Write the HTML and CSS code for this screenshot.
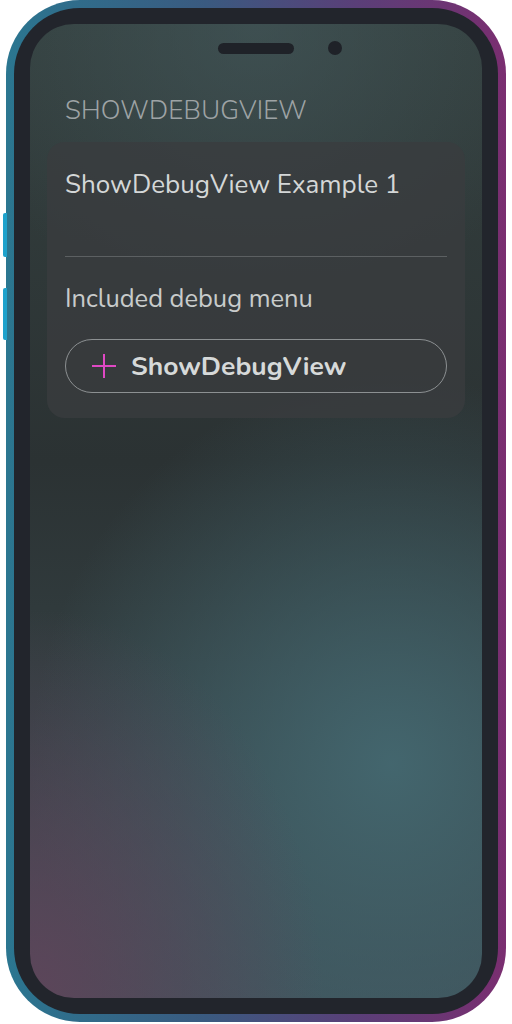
FILE: index.html
```html
<!DOCTYPE html>
<html>
<head>
<meta charset="utf-8">
<link rel="stylesheet" href="styles.css">
</head>
<body>
<div class="device">
  <div class="side-btn btn-a"></div>
  <div class="side-btn btn-b"></div>
  <div class="bezel">
    <div class="screen">
      <div class="notch">
        <span class="speaker"></span>
        <span class="camera"></span>
      </div>
      <h1 class="title">SHOWDEBUGVIEW</h1>
      <div class="card">
        <div class="card-head">ShowDebugView Example 1</div>
        <div class="divider"></div>
        <div class="card-label">Included debug menu</div>
        <button class="pill">
          <svg class="plus" width="26" height="26" viewBox="0 0 26 26"><path d="M13 1V25M1 13H25" stroke="#e048c4" stroke-width="2" fill="none"/></svg>
          <span>ShowDebugView</span>
        </button>
      </div>
    </div>
  </div>
</div>
</body>
</html>
```
FILE: styles.css
```css
html, body { margin: 0; padding: 0; background: #ffffff; }
body { width: 512px; height: 1024px; overflow: hidden; font-family: "Nunito", "Lato", "Open Sans", sans-serif; }

.device {
  position: relative;
  margin-left: 6px;
  width: 500px;
  height: 1022px;
  box-sizing: border-box;
  padding: 8px 8px 8px 8px;
  border-radius: 74px;
  background: linear-gradient(90deg, #2b7690 0%, #3a5a80 40%, #5a3f78 70%, #7a2e70 100%);
}
.side-btn {
  position: absolute;
  left: -3px;
  width: 4px;
  background: #1ea2cc;
  border-radius: 2px 0 0 2px;
}
.btn-a { top: 213px; height: 44px; }
.btn-b { top: 288px; height: 52px; }

.bezel {
  height: 100%;
  box-sizing: border-box;
  padding: 16px;
  border-radius: 66px;
  background: #22252c;
}
.screen {
  height: 100%;
  border-radius: 44px;
  overflow: hidden;
  display: flex;
  flex-direction: column;
  background:
    radial-gradient(ellipse 70% 30% at 50% 0%, rgba(70,92,96,0.55), rgba(70,92,96,0) 100%),
    radial-gradient(ellipse 65% 40% at 0% 100%, rgba(96,68,90,0.9), rgba(96,68,90,0) 100%),
    radial-gradient(ellipse 80% 40% at 80% 76%, rgba(68,104,112,0.95), rgba(68,104,112,0) 100%),
    linear-gradient(180deg, #34403f 0%, #2b3233 45%, #303a3c 60%, #3e5058 100%);
}

.notch {
  display: grid;
  grid-template-columns: 1fr auto 1fr;
  align-items: center;
  padding-top: 17px;
}
.speaker {
  grid-column: 2;
  width: 76px;
  height: 11px;
  border-radius: 6px;
  background: #1f2228;
}
.camera {
  grid-column: 3;
  margin-left: 34px;
  width: 14px;
  height: 14px;
  border-radius: 50%;
  background: #1f2228;
}

.title {
  margin: 41px 0 0 35px;
  font-size: 26px;
  font-weight: 300;
  line-height: 30px;
  color: #9ea3a5;
  letter-spacing: 0.2px;
}

.card {
  margin: 16px 17px 0 17px;
  padding: 27px 18px 25px 18px;
  border-radius: 18px;
  background: rgba(58,60,62,0.8);
  display: flex;
  flex-direction: column;
}
.card-head {
  font-size: 26px;
  line-height: 32px;
  color: #d4d7d7;
  height: 87px;
}
.divider {
  height: 1px;
  background: #5c6062;
}
.card-label {
  margin-top: 27px;
  font-size: 25.5px;
  line-height: 30px;
  color: #c8cbcb;
}
.pill {
  margin-top: 25px;
  height: 54px;
  border: 1px solid #8c9092;
  border-radius: 27px;
  background: transparent;
  display: flex;
  align-items: center;
  gap: 14px;
  padding: 0 0 0 25px;
  font-family: inherit;
  font-size: 26.5px;
  font-weight: 700;
  color: #d6d9d9;
}
.plus { display: block; }
```
